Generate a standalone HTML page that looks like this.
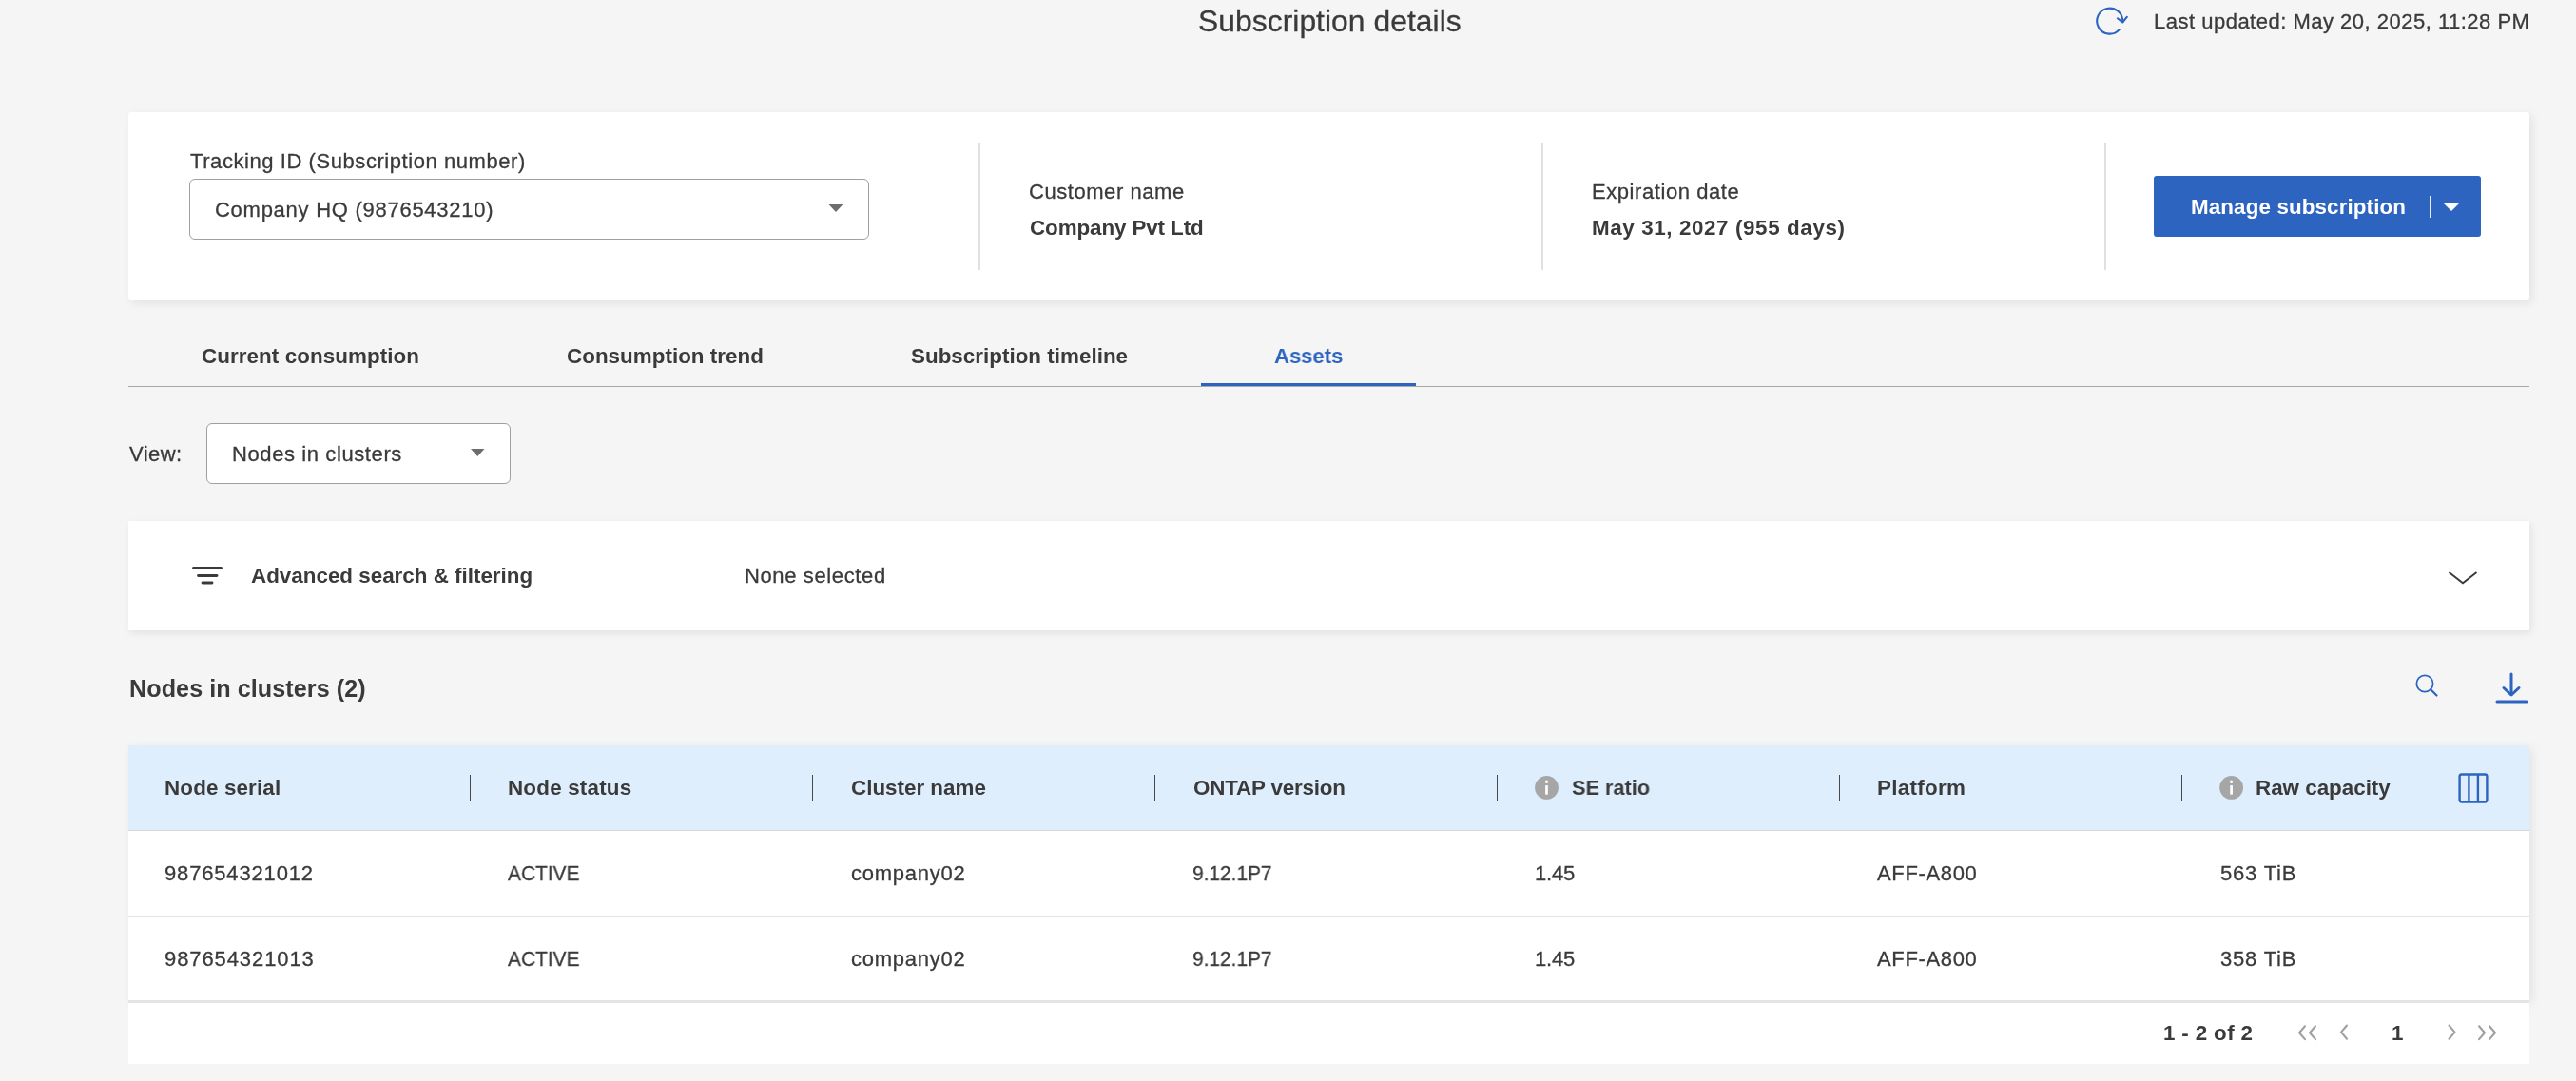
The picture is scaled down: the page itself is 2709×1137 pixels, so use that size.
<!DOCTYPE html>
<html><head><meta charset="utf-8"><style>
html,body{margin:0;padding:0;}
body{width:2709px;height:1137px;background:#f5f5f5;position:relative;overflow:hidden;font-family:"Liberation Sans",sans-serif;}
.t{position:absolute;white-space:pre;line-height:1;will-change:transform;font-family:"Liberation Sans",sans-serif;}
.a{position:absolute;}
.card{position:absolute;background:#fff;}
svg{position:absolute;overflow:visible;}

</style></head><body>
<!-- refresh icon -->
<svg class="a" style="left:0;top:0" width="2709" height="1137" viewBox="0 0 2709 1137">
  <path d="M2228.8 31.15 A13.5 13.5 0 1 1 2232.2 23.0" fill="none" stroke="#2c64c0" stroke-width="2.1" stroke-linecap="round"/>
  <path d="M2226.9 19.3 L2232.2 23.5 L2236.8 17.9" fill="none" stroke="#2c64c0" stroke-width="2.1" stroke-linecap="round" stroke-linejoin="round"/>
</svg>
<!-- top card -->
<div class="card" style="left:135px;top:118px;width:2525px;height:198px;border-radius:3px;box-shadow:3px 3px 10px rgba(0,0,0,0.08)"></div>
<div class="a" style="left:199px;top:188px;width:713px;height:62px;border:1px solid #a0a0a0;border-radius:6px;background:#fff"></div>
<svg class="a" style="left:871px;top:215px" width="16" height="9" viewBox="0 0 16 9"><path d="M0.5 0 L15.5 0 L8 8 Z" fill="#6d6d6d"/></svg>
<div class="a" style="left:1029px;top:150px;width:2px;height:134px;background:#e0e0e0"></div>
<div class="a" style="left:1621px;top:150px;width:1.5px;height:134px;background:#e0e0e0"></div>
<div class="a" style="left:2213px;top:150px;width:1.5px;height:134px;background:#e0e0e0"></div>
<div class="a" style="left:2265px;top:185px;width:344px;height:64px;background:#2c64c0;border-radius:3px"></div>
<div class="a" style="left:2555px;top:206px;width:1.3px;height:23px;background:#e8eef8"></div>
<svg class="a" style="left:2570px;top:214px" width="16" height="9" viewBox="0 0 16 9"><path d="M0 0 L16 0 L8 8 Z" fill="#fff"/></svg>
<!-- tabs -->
<div class="a" style="left:135px;top:406px;width:2525px;height:1px;background:#a9a9a9"></div>
<div class="a" style="left:1263px;top:403px;width:226px;height:3px;background:#2c64c0"></div>
<!-- view select -->
<div class="a" style="left:217px;top:445px;width:318px;height:62px;border:1px solid #a0a0a0;border-radius:6px;background:#fff"></div>
<svg class="a" style="left:495px;top:472px" width="16" height="9" viewBox="0 0 16 9"><path d="M0 0 L14.5 0 L7.25 8 Z" fill="#6d6d6d"/></svg>
<!-- adv search panel -->
<div class="card" style="left:135px;top:548px;width:2525px;height:115px;box-shadow:2px 3px 8px rgba(0,0,0,0.08)"></div>
<svg class="a" style="left:0;top:0" width="2709" height="1137" viewBox="0 0 2709 1137">
  <g stroke="#3a3a3a" stroke-width="2.8" stroke-linecap="round" fill="none">
    <line x1="203.5" y1="597.5" x2="232.5" y2="597.5"/>
    <line x1="208.5" y1="605.5" x2="228" y2="605.5"/>
    <line x1="213" y1="613" x2="223" y2="613"/>
  </g>
  <path d="M2575.5 602 L2590 613.2 L2604.5 602" fill="none" stroke="#3a3a3a" stroke-width="2"/>
  <!-- search icon -->
  <circle cx="2550" cy="719" r="8.6" fill="none" stroke="#2c64c0" stroke-width="1.7"/>
  <line x1="2556.2" y1="725.2" x2="2562.5" y2="731.5" stroke="#2c64c0" stroke-width="2.2" stroke-linecap="round"/>
  <!-- download icon -->
  <g stroke="#2c64c0" stroke-width="3" stroke-linecap="round" fill="none" stroke-linejoin="round">
    <line x1="2641" y1="709" x2="2641" y2="730.5"/>
    <path d="M2633 723.5 L2641 731 L2649 723.5"/>
    <line x1="2626" y1="738" x2="2657" y2="738"/>
  </g>
</svg>
<!-- table -->
<div class="card" style="left:135px;top:784px;width:2525px;height:268px;box-shadow:3px 3px 10px rgba(0,0,0,0.08)"></div>
<div class="card" style="left:135px;top:1055px;width:2525px;height:64px"></div>
<div class="a" style="left:135px;top:784px;width:2525px;height:89px;background:#dfeefc"></div>
<div class="a" style="left:135px;top:873px;width:2525px;height:1px;background:#d8d8d8"></div>
<div class="a" style="left:135px;top:963px;width:2525px;height:1px;background:#e2e2e2"></div>
<div class="a" style="left:135px;top:1052px;width:2525px;height:3px;background:#e4e4e4"></div>
<div class="a" style="left:494px;top:815px;width:1.2px;height:27px;background:#484848"></div>
<div class="a" style="left:854px;top:815px;width:1.2px;height:27px;background:#484848"></div>
<div class="a" style="left:1214px;top:815px;width:1.2px;height:27px;background:#484848"></div>
<div class="a" style="left:1574px;top:815px;width:1.2px;height:27px;background:#484848"></div>
<div class="a" style="left:1934px;top:815px;width:1.2px;height:27px;background:#484848"></div>
<div class="a" style="left:2294px;top:815px;width:1.2px;height:27px;background:#484848"></div>
<svg class="a" style="left:0;top:0" width="2709" height="1137" viewBox="0 0 2709 1137">
  <g>
    <circle cx="1626.5" cy="828.4" r="12.4" fill="#a6a6a6"/>
    <circle cx="1626.5" cy="822.2" r="1.7" fill="#fff"/>
    <rect x="1625.15" y="826" width="2.7" height="9.7" rx="0.6" fill="#fff"/>
  </g>
  <g>
    <circle cx="2346.6" cy="828.4" r="12.4" fill="#a6a6a6"/>
    <circle cx="2346.6" cy="822.2" r="1.7" fill="#fff"/>
    <rect x="2345.25" y="826" width="2.7" height="9.7" rx="0.6" fill="#fff"/>
  </g>
  <g fill="none" stroke="#2c64c0" stroke-width="2.4">
    <rect x="2586.6" y="814.5" width="28.8" height="29" rx="2.2"/>
    <line x1="2596.4" y1="815" x2="2596.4" y2="843"/>
    <line x1="2605.9" y1="815" x2="2605.9" y2="843"/>
  </g>
  <g fill="none" stroke="#a0a0a0" stroke-width="2.1" stroke-linecap="round" stroke-linejoin="round">
    <path d="M2424 1079.3 L2418 1086.2 L2424 1093.1"/>
    <path d="M2435 1079.3 L2429 1086.2 L2435 1093.1"/>
    <path d="M2468 1078.5 L2462 1085.6 L2468 1092.7"/>
    <path d="M2575.5 1078.5 L2581.5 1085.6 L2575.5 1092.7"/>
    <path d="M2607 1079.3 L2613 1086.2 L2607 1093.1"/>
    <path d="M2618 1079.3 L2624 1086.2 L2618 1093.1"/>
  </g>
</svg>

<div class="t" style="left:1259.50px;top:7.20px;font-size:31.8px;font-weight:400;color:#3a3a3a;letter-spacing:0.051px;-webkit-text-stroke:0.3px #3a3a3a;">Subscription details</div>
<div class="t" style="left:2265.00px;top:12.00px;font-size:22px;font-weight:400;color:#3a3a3a;letter-spacing:0.498px;-webkit-text-stroke:0.3px #3a3a3a;">Last updated: May 20, 2025, 11:28 PM</div>
<div class="t" style="left:200.00px;top:159.00px;font-size:22px;font-weight:400;color:#3a3a3a;letter-spacing:0.567px;-webkit-text-stroke:0.3px #3a3a3a;">Tracking ID (Subscription number)</div>
<div class="t" style="left:225.60px;top:210.30px;font-size:22px;font-weight:400;color:#3a3a3a;letter-spacing:0.734px;-webkit-text-stroke:0.3px #3a3a3a;">Company HQ (9876543210)</div>
<div class="t" style="left:1081.60px;top:190.70px;font-size:22px;font-weight:400;color:#3a3a3a;letter-spacing:0.553px;-webkit-text-stroke:0.3px #3a3a3a;">Customer name</div>
<div class="t" style="left:1083.00px;top:228.80px;font-size:22.4px;font-weight:700;color:#3a3a3a;letter-spacing:-0.102px;">Company Pvt Ltd</div>
<div class="t" style="left:1673.50px;top:190.70px;font-size:22px;font-weight:400;color:#3a3a3a;letter-spacing:0.570px;-webkit-text-stroke:0.3px #3a3a3a;">Expiration date</div>
<div class="t" style="left:1673.50px;top:228.80px;font-size:22.4px;font-weight:700;color:#3a3a3a;letter-spacing:0.603px;">May 31, 2027 (955 days)</div>
<div class="t" style="left:2303.50px;top:207.20px;font-size:22.4px;font-weight:700;color:#ffffff;letter-spacing:0.113px;">Manage subscription</div>
<div class="t" style="left:212.30px;top:364.00px;font-size:22.4px;font-weight:700;color:#3a3a3a;letter-spacing:0.075px;">Current consumption</div>
<div class="t" style="left:595.50px;top:364.00px;font-size:22.4px;font-weight:700;color:#3a3a3a;letter-spacing:0.026px;">Consumption trend</div>
<div class="t" style="left:957.70px;top:364.00px;font-size:22.4px;font-weight:700;color:#3a3a3a;letter-spacing:0.019px;">Subscription timeline</div>
<div class="t" style="left:1340.00px;top:364.00px;font-size:22.4px;font-weight:700;color:#2c64c0;transform:scaleX(0.9851);transform-origin:0.00px 0;">Assets</div>
<div class="t" style="left:136.20px;top:467.10px;font-size:22px;font-weight:400;color:#3a3a3a;letter-spacing:0.453px;-webkit-text-stroke:0.3px #3a3a3a;">View:</div>
<div class="t" style="left:243.60px;top:467.10px;font-size:22px;font-weight:400;color:#3a3a3a;letter-spacing:0.598px;-webkit-text-stroke:0.3px #3a3a3a;">Nodes in clusters</div>
<div class="t" style="left:264.00px;top:595.30px;font-size:22.4px;font-weight:700;color:#3a3a3a;">Advanced search &amp; filtering</div>
<div class="t" style="left:783.10px;top:594.80px;font-size:22px;font-weight:400;color:#3a3a3a;letter-spacing:0.624px;-webkit-text-stroke:0.3px #3a3a3a;">None selected</div>
<div class="t" style="left:135.70px;top:711.90px;font-size:25.2px;font-weight:700;color:#3a3a3a;letter-spacing:0.042px;">Nodes in clusters (2)</div>
<div class="t" style="left:2274.50px;top:1076.10px;font-size:22.4px;font-weight:700;color:#3a3a3a;letter-spacing:0.347px;">1 - 2 of 2</div>
<div class="t" style="left:2514.70px;top:1076.10px;font-size:22.4px;font-weight:700;color:#3a3a3a;">1</div>
<div class="t" style="left:173.40px;top:818.00px;font-size:22.4px;font-weight:700;color:#3a3a3a;letter-spacing:0.141px;">Node serial</div>
<div class="t" style="left:533.60px;top:818.00px;font-size:22.4px;font-weight:700;color:#3a3a3a;letter-spacing:0.201px;">Node status</div>
<div class="t" style="left:894.70px;top:818.00px;font-size:22.4px;font-weight:700;color:#3a3a3a;">Cluster name</div>
<div class="t" style="left:1254.60px;top:818.00px;font-size:22.4px;font-weight:700;color:#3a3a3a;letter-spacing:-0.183px;">ONTAP version</div>
<div class="t" style="left:1652.90px;top:818.00px;font-size:22.4px;font-weight:700;color:#3a3a3a;transform:scaleX(0.9698);transform-origin:0.00px 0;">SE ratio</div>
<div class="t" style="left:1973.70px;top:818.00px;font-size:22.4px;font-weight:700;color:#3a3a3a;letter-spacing:0.284px;">Platform</div>
<div class="t" style="left:2371.90px;top:818.00px;font-size:22.4px;font-weight:700;color:#3a3a3a;letter-spacing:-0.011px;">Raw capacity</div>
<div class="t" style="left:173.40px;top:908.00px;font-size:22px;font-weight:400;color:#3a3a3a;letter-spacing:0.837px;-webkit-text-stroke:0.3px #3a3a3a;">987654321012</div>
<div class="t" style="left:534.40px;top:908.00px;font-size:22px;font-weight:400;color:#3a3a3a;transform:scaleX(0.9507);transform-origin:0.00px 0;-webkit-text-stroke:0.3px #3a3a3a;">ACTIVE</div>
<div class="t" style="left:894.70px;top:908.00px;font-size:22px;font-weight:400;color:#3a3a3a;letter-spacing:0.750px;-webkit-text-stroke:0.3px #3a3a3a;">company02</div>
<div class="t" style="left:1253.70px;top:908.00px;font-size:22px;font-weight:400;color:#3a3a3a;transform:scaleX(0.9477);transform-origin:1.00px 0;-webkit-text-stroke:0.3px #3a3a3a;">9.12.1P7</div>
<div class="t" style="left:1613.70px;top:908.00px;font-size:22px;font-weight:400;color:#3a3a3a;letter-spacing:-0.161px;-webkit-text-stroke:0.3px #3a3a3a;">1.45</div>
<div class="t" style="left:1974.40px;top:908.00px;font-size:22px;font-weight:400;color:#3a3a3a;letter-spacing:0.654px;-webkit-text-stroke:0.3px #3a3a3a;">AFF-A800</div>
<div class="t" style="left:2334.80px;top:908.00px;font-size:22px;font-weight:400;color:#3a3a3a;letter-spacing:0.812px;-webkit-text-stroke:0.3px #3a3a3a;">563 TiB</div>
<div class="t" style="left:173.40px;top:997.70px;font-size:22px;font-weight:400;color:#3a3a3a;letter-spacing:0.910px;-webkit-text-stroke:0.3px #3a3a3a;">987654321013</div>
<div class="t" style="left:534.40px;top:997.70px;font-size:22px;font-weight:400;color:#3a3a3a;transform:scaleX(0.9507);transform-origin:0.00px 0;-webkit-text-stroke:0.3px #3a3a3a;">ACTIVE</div>
<div class="t" style="left:894.70px;top:997.70px;font-size:22px;font-weight:400;color:#3a3a3a;letter-spacing:0.750px;-webkit-text-stroke:0.3px #3a3a3a;">company02</div>
<div class="t" style="left:1253.70px;top:997.70px;font-size:22px;font-weight:400;color:#3a3a3a;transform:scaleX(0.9477);transform-origin:1.00px 0;-webkit-text-stroke:0.3px #3a3a3a;">9.12.1P7</div>
<div class="t" style="left:1613.70px;top:997.70px;font-size:22px;font-weight:400;color:#3a3a3a;letter-spacing:-0.161px;-webkit-text-stroke:0.3px #3a3a3a;">1.45</div>
<div class="t" style="left:1974.40px;top:997.70px;font-size:22px;font-weight:400;color:#3a3a3a;letter-spacing:0.654px;-webkit-text-stroke:0.3px #3a3a3a;">AFF-A800</div>
<div class="t" style="left:2334.80px;top:997.70px;font-size:22px;font-weight:400;color:#3a3a3a;letter-spacing:0.812px;-webkit-text-stroke:0.3px #3a3a3a;">358 TiB</div>
</body></html>
